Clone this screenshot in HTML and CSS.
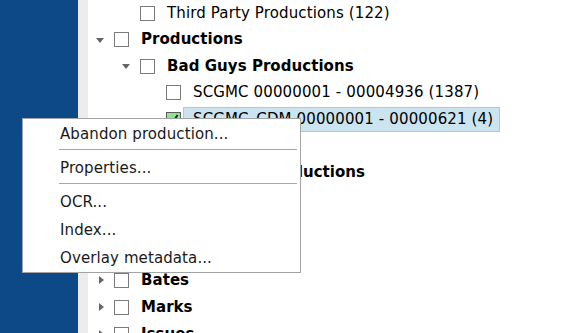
FILE: index.html
```html
<!DOCTYPE html>
<html>
<head>
<meta charset="utf-8">
<link rel="stylesheet" href="styles.css">
</head>
<body>
<div class="app">
  <aside class="sidebar"></aside>
  <div class="gutter"></div>
  <main class="tree-panel">
    <ul class="tree">
      <li class="row lvl1"><span class="twisty"></span><span class="cb"></span><span class="label">Third Party Productions (122)</span></li>
      <li class="row lvl0"><span class="twisty open"></span><span class="cb"></span><span class="label bold">Productions</span></li>
      <li class="row lvl1"><span class="twisty open"></span><span class="cb"></span><span class="label bold">Bad Guys Productions</span></li>
      <li class="row lvl2"><span class="twisty"></span><span class="cb"></span><span class="label">SCGMC 00000001 - 00004936 (1387)</span></li>
      <li class="row lvl2"><span class="twisty"></span><span class="cb checked"><svg width="13" height="13" viewBox="0 0 13 13"><polyline points="3,7 5.5,10 10.5,2" fill="none" stroke="#1d2b1d" stroke-width="2"/></svg></span><span class="label selected">SCGMC_CDM 00000001 - 00000621 (4)</span></li>
      <li class="row lvl1"><span class="twisty"></span><span class="cb"></span><span class="label">Other (2)</span></li>
      <li class="row lvl1"><span class="twisty closed"></span><span class="cb"></span><span class="label bold">Good Guys Productions</span></li>
      <li class="row lvl0"><span class="twisty closed"></span><span class="cb"></span><span class="label bold">Folders</span></li>
      <li class="row lvl0"><span class="twisty closed"></span><span class="cb"></span><span class="label bold">Tags</span></li>
      <li class="row lvl0 group-end"><span class="twisty closed"></span><span class="cb"></span><span class="label bold">Notes</span></li>
      <li class="row lvl0 root-tall"><span class="twisty closed"></span><span class="cb"></span><span class="label bold">Bates</span></li>
      <li class="row lvl0 root-tall"><span class="twisty closed"></span><span class="cb"></span><span class="label bold">Marks</span></li>
      <li class="row lvl0 root-tall"><span class="twisty closed"></span><span class="cb"></span><span class="label bold">Issues</span></li>
    </ul>
  </main>
  <div class="menu">
    <div class="menu-item">Abandon production...</div>
    <div class="menu-sep"></div>
    <div class="menu-item">Properties...</div>
    <div class="menu-sep"></div>
    <div class="menu-item">OCR...</div>
    <div class="menu-item">Index...</div>
    <div class="menu-item">Overlay metadata...</div>
  </div>
</div>
</body>
</html>
```

FILE: styles.css
```css
html, body {
  margin: 0;
  padding: 0;
  background: #fff;
}

body {
  font-family: "DejaVu Sans", Verdana, sans-serif;
  font-size: 15px;
  color: #000;
}

.app {
  position: relative;
  display: flex;
  width: 575px;
  height: 333px;
  overflow: hidden;
}

.sidebar {
  width: 78px;
  flex: none;
  background: #0e4987;
}

.gutter {
  width: 10px;
  flex: none;
  background: #ececec;
}

.tree-panel {
  flex: 1;
  overflow: hidden;
}

.tree {
  list-style: none;
  margin: 0;
  padding: 0;
}

.row {
  display: flex;
  align-items: center;
  height: 26.5px;
  white-space: nowrap;
}

.row.root-tall {
  height: 27px;
}

.lvl0 { padding-left: 8px; }
.lvl1 { padding-left: 34px; }
.lvl2 { padding-left: 60px; }

.group-end { margin-bottom: 2px; }

.twisty {
  width: 18px;
  height: 10px;
  flex: none;
  position: relative;
}

.twisty.open::before {
  content: "";
  position: absolute;
  left: 0;
  top: 3px;
  border-left: 4.5px solid transparent;
  border-right: 4.5px solid transparent;
  border-top: 5px solid #666;
}

.twisty.closed::before {
  content: "";
  position: absolute;
  left: 3px;
  top: 0.5px;
  border-top: 4.5px solid transparent;
  border-bottom: 4.5px solid transparent;
  border-left: 5.5px solid #666;
}

.cb {
  width: 15px;
  height: 15px;
  box-sizing: border-box;
  flex: none;
  border: 1px solid #7a7a7a;
  background: #fff;
  margin-right: 2px;
  display: flex;
  align-items: center;
  justify-content: center;
}

.cb.checked {
  background: #8fe68f;
  border-color: #5a5a5a;
}

.label {
  box-sizing: border-box;
  height: 25px;
  line-height: 23px;
  padding: 0 6px 0 9px;
  border: 1px solid transparent;
  letter-spacing: 0.13px;
}

.label.bold {
  font-weight: bold;
  letter-spacing: 0.05px;
}

.label.selected {
  background: #cbe4ef;
  border-color: #9ccfe1;
}

.menu {
  position: absolute;
  left: 22px;
  top: 118px;
  width: 279px;
  box-sizing: border-box;
  background: #fff;
  border: 1px solid #a3a3a3;
  padding-top: 1px;
  color: #1a1a1a;
}

.menu-item {
  height: 28px;
  line-height: 28px;
  padding-left: 37px;
  white-space: nowrap;
  letter-spacing: 0.1px;
}

.menu-sep {
  height: 1px;
  background: #a8a8a8;
  margin: 1px 3px 4px 36px;
}
```
